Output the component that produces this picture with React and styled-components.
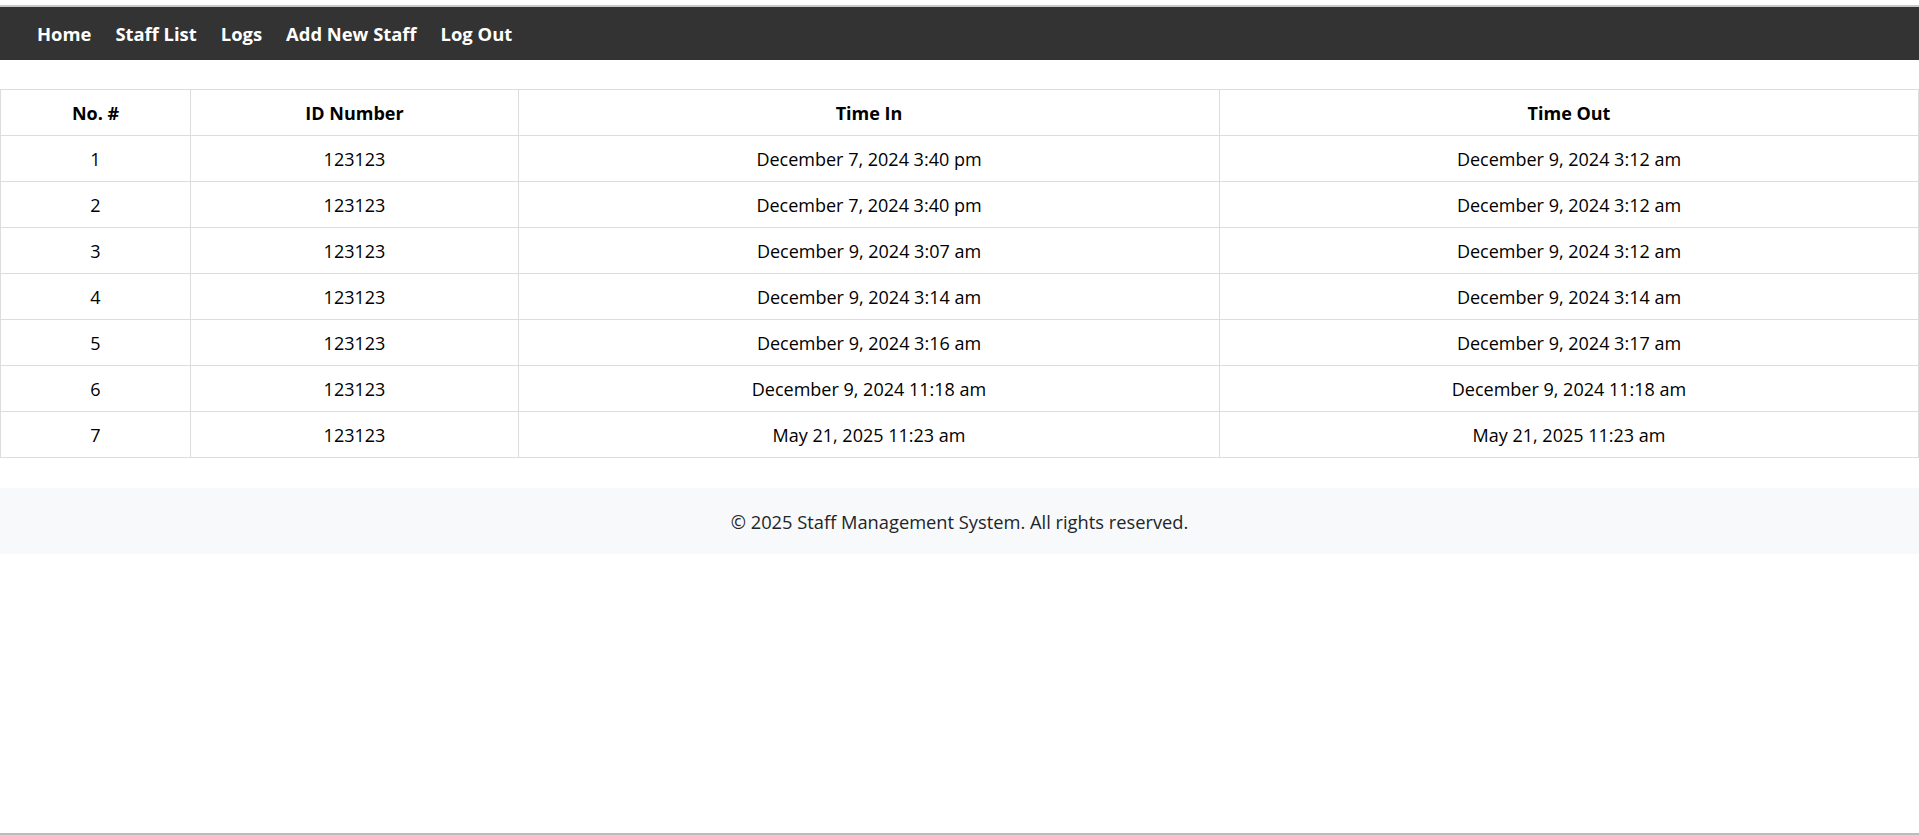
import { createGlobalStyle, styled } from 'styled-components'

const GlobalStyle = createGlobalStyle`
  html, body {
    margin: 0;
    padding: 0;
    background: #fff;
  }
  body {
    font-family: "Open Sans", "Noto Sans", sans-serif;
  }
`

const logs = [
    { id: '123123', timeIn: 'December 7, 2024 3:40 pm', timeOut: 'December 9, 2024 3:12 am' },
    { id: '123123', timeIn: 'December 7, 2024 3:40 pm', timeOut: 'December 9, 2024 3:12 am' },
    { id: '123123', timeIn: 'December 9, 2024 3:07 am', timeOut: 'December 9, 2024 3:12 am' },
    { id: '123123', timeIn: 'December 9, 2024 3:14 am', timeOut: 'December 9, 2024 3:14 am' },
    { id: '123123', timeIn: 'December 9, 2024 3:16 am', timeOut: 'December 9, 2024 3:17 am' },
    { id: '123123', timeIn: 'December 9, 2024 11:18 am', timeOut: 'December 9, 2024 11:18 am' },
    { id: '123123', timeIn: 'May 21, 2025 11:23 am', timeOut: 'May 21, 2025 11:23 am' },
]

const links = ['Home', 'Staff List', 'Logs', 'Add New Staff', 'Log Out']

export default function App() {
    return (
        <>
        <GlobalStyle />
        <Page>
            <NavBar>
                {links.map(l => <NavLink key={l} href="#">{l}</NavLink>)}
            </NavBar>
            <LogsTable>
                <colgroup>
                    <col style={{ width: 190 }} />
                    <col style={{ width: 328 }} />
                    <col style={{ width: 701 }} />
                    <col />
                </colgroup>
                <thead>
                    <tr>
                        <Th>No. #</Th>
                        <Th>ID Number</Th>
                        <Th>Time In</Th>
                        <Th>Time Out</Th>
                    </tr>
                </thead>
                <tbody>
                    {logs.map((log, index) =>
                        <tr key={index}>
                            <Td>{index + 1}</Td>
                            <Td>{log.id}</Td>
                            <Td>{log.timeIn}</Td>
                            <Td>{log.timeOut}</Td>
                        </tr>
                    )}
                </tbody>
            </LogsTable>
            <Footer>© 2025 Staff Management System. All rights reserved.</Footer>
        </Page>
        </>
    )
}

const Page = styled.div`
    height: 835px;
    box-sizing: border-box;
    padding-top: 5px;
    border-bottom: 2px solid #bcbcbc;
    display: flex;
    flex-direction: column;
`

const NavBar = styled.nav`
    display: flex;
    align-items: center;
    height: 53px;
    padding-left: 25px;
    background-color: #333;
    border-top: 2px solid #c8c8c8;
`

const NavLink = styled.a`
    color: #fff;
    text-decoration: none;
    font-weight: 700;
    font-size: 18.4px;
    padding: 0 12px;
`

const LogsTable = styled.table`
    width: 100%;
    table-layout: fixed;
    border-collapse: collapse;
    margin-top: 29px;
`

const Th = styled.th`
    height: 46px;
    box-sizing: border-box;
    border: 1px solid #ddd;
    font-size: 18px;
    font-weight: 700;
    color: #000;
    text-align: center;
    padding: 0 8px;
`

const Td = styled.td`
    height: 46px;
    box-sizing: border-box;
    border: 1px solid #ddd;
    font-size: 18px;
    color: #000;
    text-align: center;
    padding: 0 8px;
`

const Footer = styled.footer`
    margin-top: 30px;
    height: 66px;
    display: flex;
    align-items: center;
    justify-content: center;
    background-color: #f8f9fa;
    color: #212529;
    font-size: 18.3px;
`
